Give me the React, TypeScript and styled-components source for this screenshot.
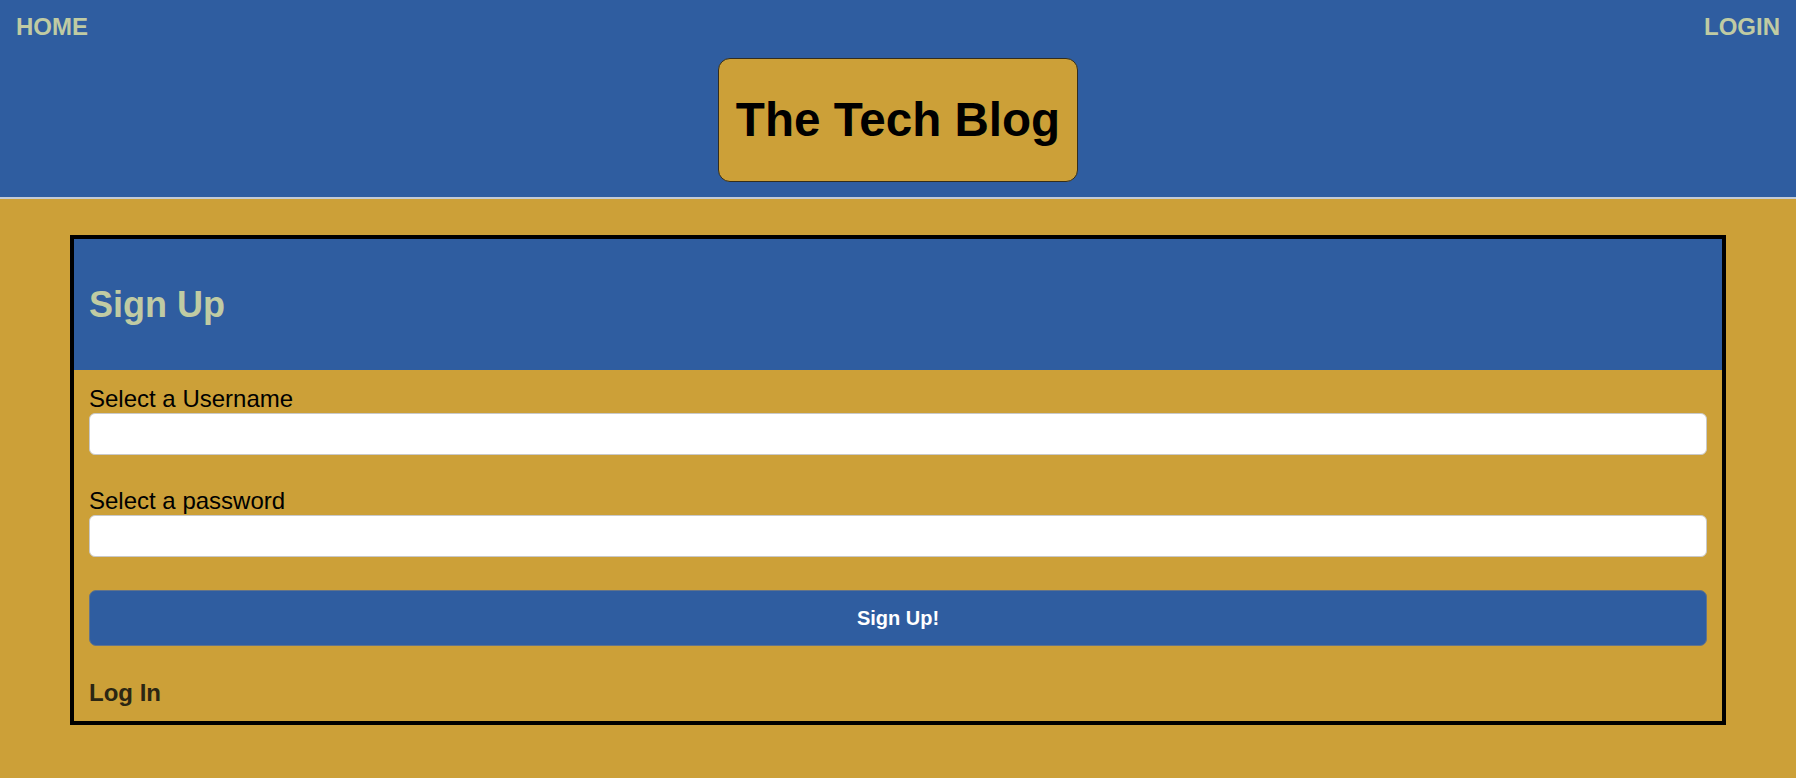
import React from "react";
import styled, { createGlobalStyle } from "styled-components";

const BLUE = "#2f5da0";
const GOLD = "#cca038";
const PALE = "#c0cba3";

const GlobalStyle = createGlobalStyle`
  html, body {
    margin: 0;
    padding: 0;
    background: ${GOLD};
    min-height: 100%;
  }
  body {
    font-family: "Liberation Sans", Arial, Helvetica, sans-serif;
  }
  * { box-sizing: border-box; }
`;

const Page = styled.div`
  min-height: 778px;
  background: ${GOLD};
  display: flex;
  flex-direction: column;
`;

const Header = styled.header`
  background: ${BLUE};
  height: 199px;
  border-bottom: 2px solid #c3cbd6;
  display: flex;
  flex-direction: column;
  align-items: center;
  padding: 13px 16px 0;
`;

const Nav = styled.nav`
  width: 100%;
  display: flex;
  justify-content: space-between;
  height: 28px;
`;

const NavLink = styled.a`
  color: ${PALE};
  font-weight: 700;
  font-size: 24px;
  line-height: 28px;
  text-decoration: none;
  cursor: pointer;
`;

const TitleBox = styled.div`
  margin-top: 17px;
  width: 360px;
  height: 124px;
  background: ${GOLD};
  border: 1px solid #332d1c;
  border-radius: 12px;
  display: flex;
  align-items: center;
  justify-content: center;
`;

const Title = styled.h1`
  margin: 0;
  font-size: 47.6px;
  font-weight: 700;
  color: #000;
  line-height: 54px;
`;

const Main = styled.main`
  padding: 36px 70px 53px;
`;

const Card = styled.section`
  border: 4px solid #000;
  display: flex;
  flex-direction: column;
`;

const CardHeader = styled.div`
  background: ${BLUE};
  height: 131px;
  display: flex;
  align-items: center;
  padding: 0 15px;
`;

const CardTitle = styled.h2`
  margin: 0;
  color: ${PALE};
  font-size: 36px;
  font-weight: 700;
  line-height: 42px;
`;

const Form = styled.form`
  display: flex;
  flex-direction: column;
  padding: 15px 15px 14px;
`;

const Label = styled.label`
  display: block;
  font-size: 24px;
  line-height: 28px;
  color: #000;
`;

const Input = styled.input<{ $spaced?: boolean }>`
  display: block;
  width: 100%;
  height: 42px;
  border: 1px solid #c9c9c9;
  border-radius: 6px;
  background: #fff;
  font-size: 18px;
  padding: 0 10px;
  margin-bottom: ${(p) => (p.$spaced ? "32px" : "0")};
  outline: none;
`;

const Button = styled.button`
  margin-top: 33px;
  width: 100%;
  height: 56px;
  background: ${BLUE};
  color: #fff;
  font-family: "Liberation Sans", Arial, Helvetica, sans-serif;
  font-size: 20px;
  font-weight: 700;
  border: 1px solid #62738a;
  border-radius: 7px;
  cursor: pointer;
`;

const FooterLink = styled.a`
  margin-top: 33px;
  font-size: 24px;
  line-height: 28px;
  font-weight: 700;
  color: #2b2613;
  text-decoration: none;
  cursor: pointer;
`;

export default function App() {
  return (
    <Page>
      <GlobalStyle />
      <Header>
        <Nav>
          <NavLink>HOME</NavLink>
          <NavLink>LOGIN</NavLink>
        </Nav>
        <TitleBox>
          <Title>The Tech Blog</Title>
        </TitleBox>
      </Header>
      <Main>
        <Card>
          <CardHeader>
            <CardTitle>Sign Up</CardTitle>
          </CardHeader>
          <Form onSubmit={(e) => e.preventDefault()}>
            <Label htmlFor="username">Select a Username</Label>
            <Input id="username" type="text" $spaced />
            <Label htmlFor="password">Select a password</Label>
            <Input id="password" type="password" />
            <Button type="submit">Sign Up!</Button>
            <FooterLink>Log In</FooterLink>
          </Form>
        </Card>
      </Main>
    </Page>
  );
}
